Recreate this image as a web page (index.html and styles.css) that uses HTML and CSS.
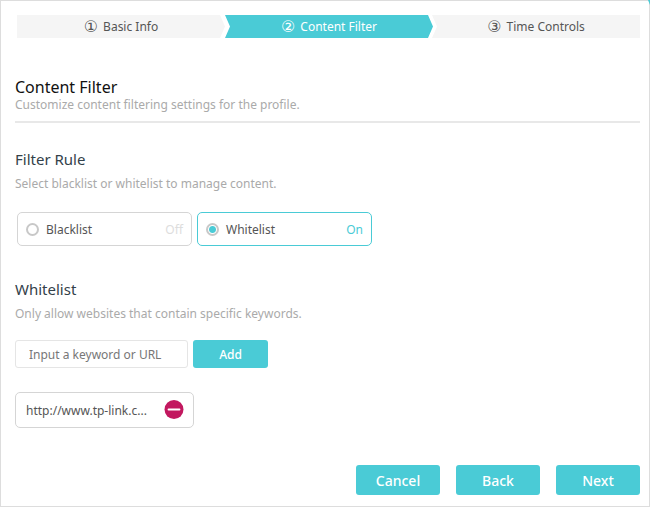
FILE: index.html
```html
<!DOCTYPE html>
<html lang="en">
<head>
    <meta charset="utf-8">
    <title>Content Filter</title>
    <link rel="stylesheet" href="styles.css">
</head>
<body>
    <form class="container">
        <ol class="steps">
            <li class="step step-first"><span class="step-number">①</span>Basic Info</li>
            <li class="step step-active"><span class="step-number">②</span>Content Filter</li>
            <li class="step step-last"><span class="step-number">③</span>Time Controls</li>
        </ol>

        <header class="page-header">
            <h1>Content Filter</h1>
            <p class="hint">Customize content filtering settings for the profile.</p>
        </header>

        <section class="rule">
            <h2>Filter Rule</h2>
            <p class="hint">Select blacklist or whitelist to manage content.</p>
            <div class="options">
                <label class="option">
                    <input type="radio" name="rule" value="blacklist">
                    <span class="option-name">Blacklist</span>
                    <span class="option-state">Off</span>
                </label>
                <label class="option">
                    <input type="radio" name="rule" value="whitelist" checked>
                    <span class="option-name">Whitelist</span>
                    <span class="option-state">On</span>
                </label>
            </div>
        </section>

        <section class="whitelist">
            <h2>Whitelist</h2>
            <p class="hint">Only allow websites that contain specific keywords.</p>
            <div class="input-group">
                <input type="text" id="keyword" aria-label="Keyword or URL" placeholder="Input a keyword or URL">
                <button type="button" class="add">Add</button>
            </div>
            <div class="entry">
                <span class="entry-url">http://www.tp-link.c...</span>
                <button type="button" class="remove" aria-label="Remove">
                    <svg width="20" height="20" viewBox="0 0 20 20">
                        <circle cx="10" cy="9.5" r="9.5" fill="#c2185f"/>
                        <path d="M4.5 9.5h11" stroke="#fff" stroke-width="1.8" stroke-linecap="round"/>
                    </svg>
                </button>
            </div>
        </section>

        <footer class="button-group">
            <button type="button">Cancel</button>
            <button type="button">Back</button>
            <button type="submit">Next</button>
        </footer>
    </form>
</body>
</html>
```

FILE: styles.css
```css
* {
    box-sizing: border-box;
}
body {
    margin: 0;
    background: #fff;
    color: #555;
    font-family: "Noto Sans", Verdana, sans-serif;
    font-size: 12px;
}
h1, h2, p {
    margin: 0;
    font-weight: normal;
}
h1, h2 {
    font-size: 16px;
    line-height: 20px;
    color: #33414a;
}
h1 {
    color: #111;
}
h2 {
    font-size: 15px;
}
button, input {
    font-family: inherit;
    font-size: inherit;
}
button {
    border: 0;
    border-radius: 3px;
    background: #4acbd6;
    color: #fff;
    font-weight: 500;
    cursor: pointer;
}
.container {
    position: relative;
    display: flex;
    flex-direction: column;
    min-height: 100vh;
    padding: 14px 9px 11px 14px;
    border: 1px solid #ddd;
}
/* coloured corner of the panel */
.container::after {
    content: "";
    position: absolute;
    top: -1px;
    right: -1px;
    width: 2px;
    height: 5px;
    background: #4acbd6;
    clip-path: polygon(0 0, 100% 0, 100% 100%);
}
.hint {
    line-height: 16px;
    color: #aaa;
}

/* steps */
.steps {
    display: flex;
    margin: 0;
    padding: 0 0 0 2px;
    list-style: none;
}
.step {
    flex: 1;
    display: flex;
    align-items: center;
    justify-content: center;
    gap: 5px;
    height: 23px;
    background: #f5f5f5;
}
.step-number {
    font-family: "DejaVu Sans", sans-serif;
    font-size: 16px;
    line-height: 23px;
}
.step-first {
    clip-path: polygon(0 0, calc(100% - 5px) 0, 100% 50%, calc(100% - 5px) 100%, 0 100%);
}
/* the middle step reaches into the notch of the last one */
.step-active {
    margin: 0 -4px 0 0;
    background: #4acbd6;
    color: #fff;
    clip-path: polygon(0 0, calc(100% - 5px) 0, 100% 50%, calc(100% - 5px) 100%, 0 100%, 5px 50%);
}
.step-last {
    margin-left: 3px;
    clip-path: polygon(0 0, 100% 0, 100% 100%, 0 100%, 5px 50%);
}

.page-header {
    margin-top: 39px;
    padding-bottom: 8px;
    border-bottom: 2px solid #e8e8e8;
}
.rule {
    margin-top: 26px;
}
.whitelist {
    margin-top: 33px;
}
.rule .hint, .whitelist .hint {
    margin-top: 7px;
}

/* blacklist / whitelist choice */
.options {
    display: flex;
    gap: 5px;
    margin-top: 20px;
    padding-left: 2px;
}
.option {
    display: flex;
    align-items: center;
    width: 175px;
    height: 34px;
    padding: 0 8px;
    border: 1px solid #d5d5d5;
    border-radius: 5px;
}
.option input {
    appearance: none;
    width: 13px;
    height: 13px;
    margin: 0 7px 0 0;
    border: 2px solid #c8c8c8;
    border-radius: 50%;
    background: #fff;
}
.option input:checked {
    background: radial-gradient(circle, #4acbd6 3px, #fff 4px);
}
.option-state {
    margin-left: auto;
    color: #ddd;
}
.option:has(:checked) {
    border-color: #4acbd6;
}
.option:has(:checked) .option-state {
    color: #4acbd6;
}

/* keywords */
.input-group {
    display: flex;
    gap: 5px;
    margin-top: 18px;
}
.input-group input {
    width: 173px;
    height: 28px;
    padding: 0 13px;
    border: 1px solid #e5e5e5;
    border-radius: 3px;
}
.input-group input::placeholder {
    color: #777;
}
.add {
    width: 75px;
}
.entry {
    display: flex;
    align-items: center;
    justify-content: space-between;
    width: 179px;
    height: 36px;
    margin-top: 24px;
    padding: 0 9px 0 10px;
    border: 1px solid #d5d5d5;
    border-radius: 5px;
}
.remove {
    display: flex;
    padding: 0;
    background: none;
}

.button-group {
    display: flex;
    justify-content: flex-end;
    gap: 16px;
    margin-top: auto;
}
.button-group button {
    width: 84px;
    height: 30px;
    font-size: 14px;
}
```
